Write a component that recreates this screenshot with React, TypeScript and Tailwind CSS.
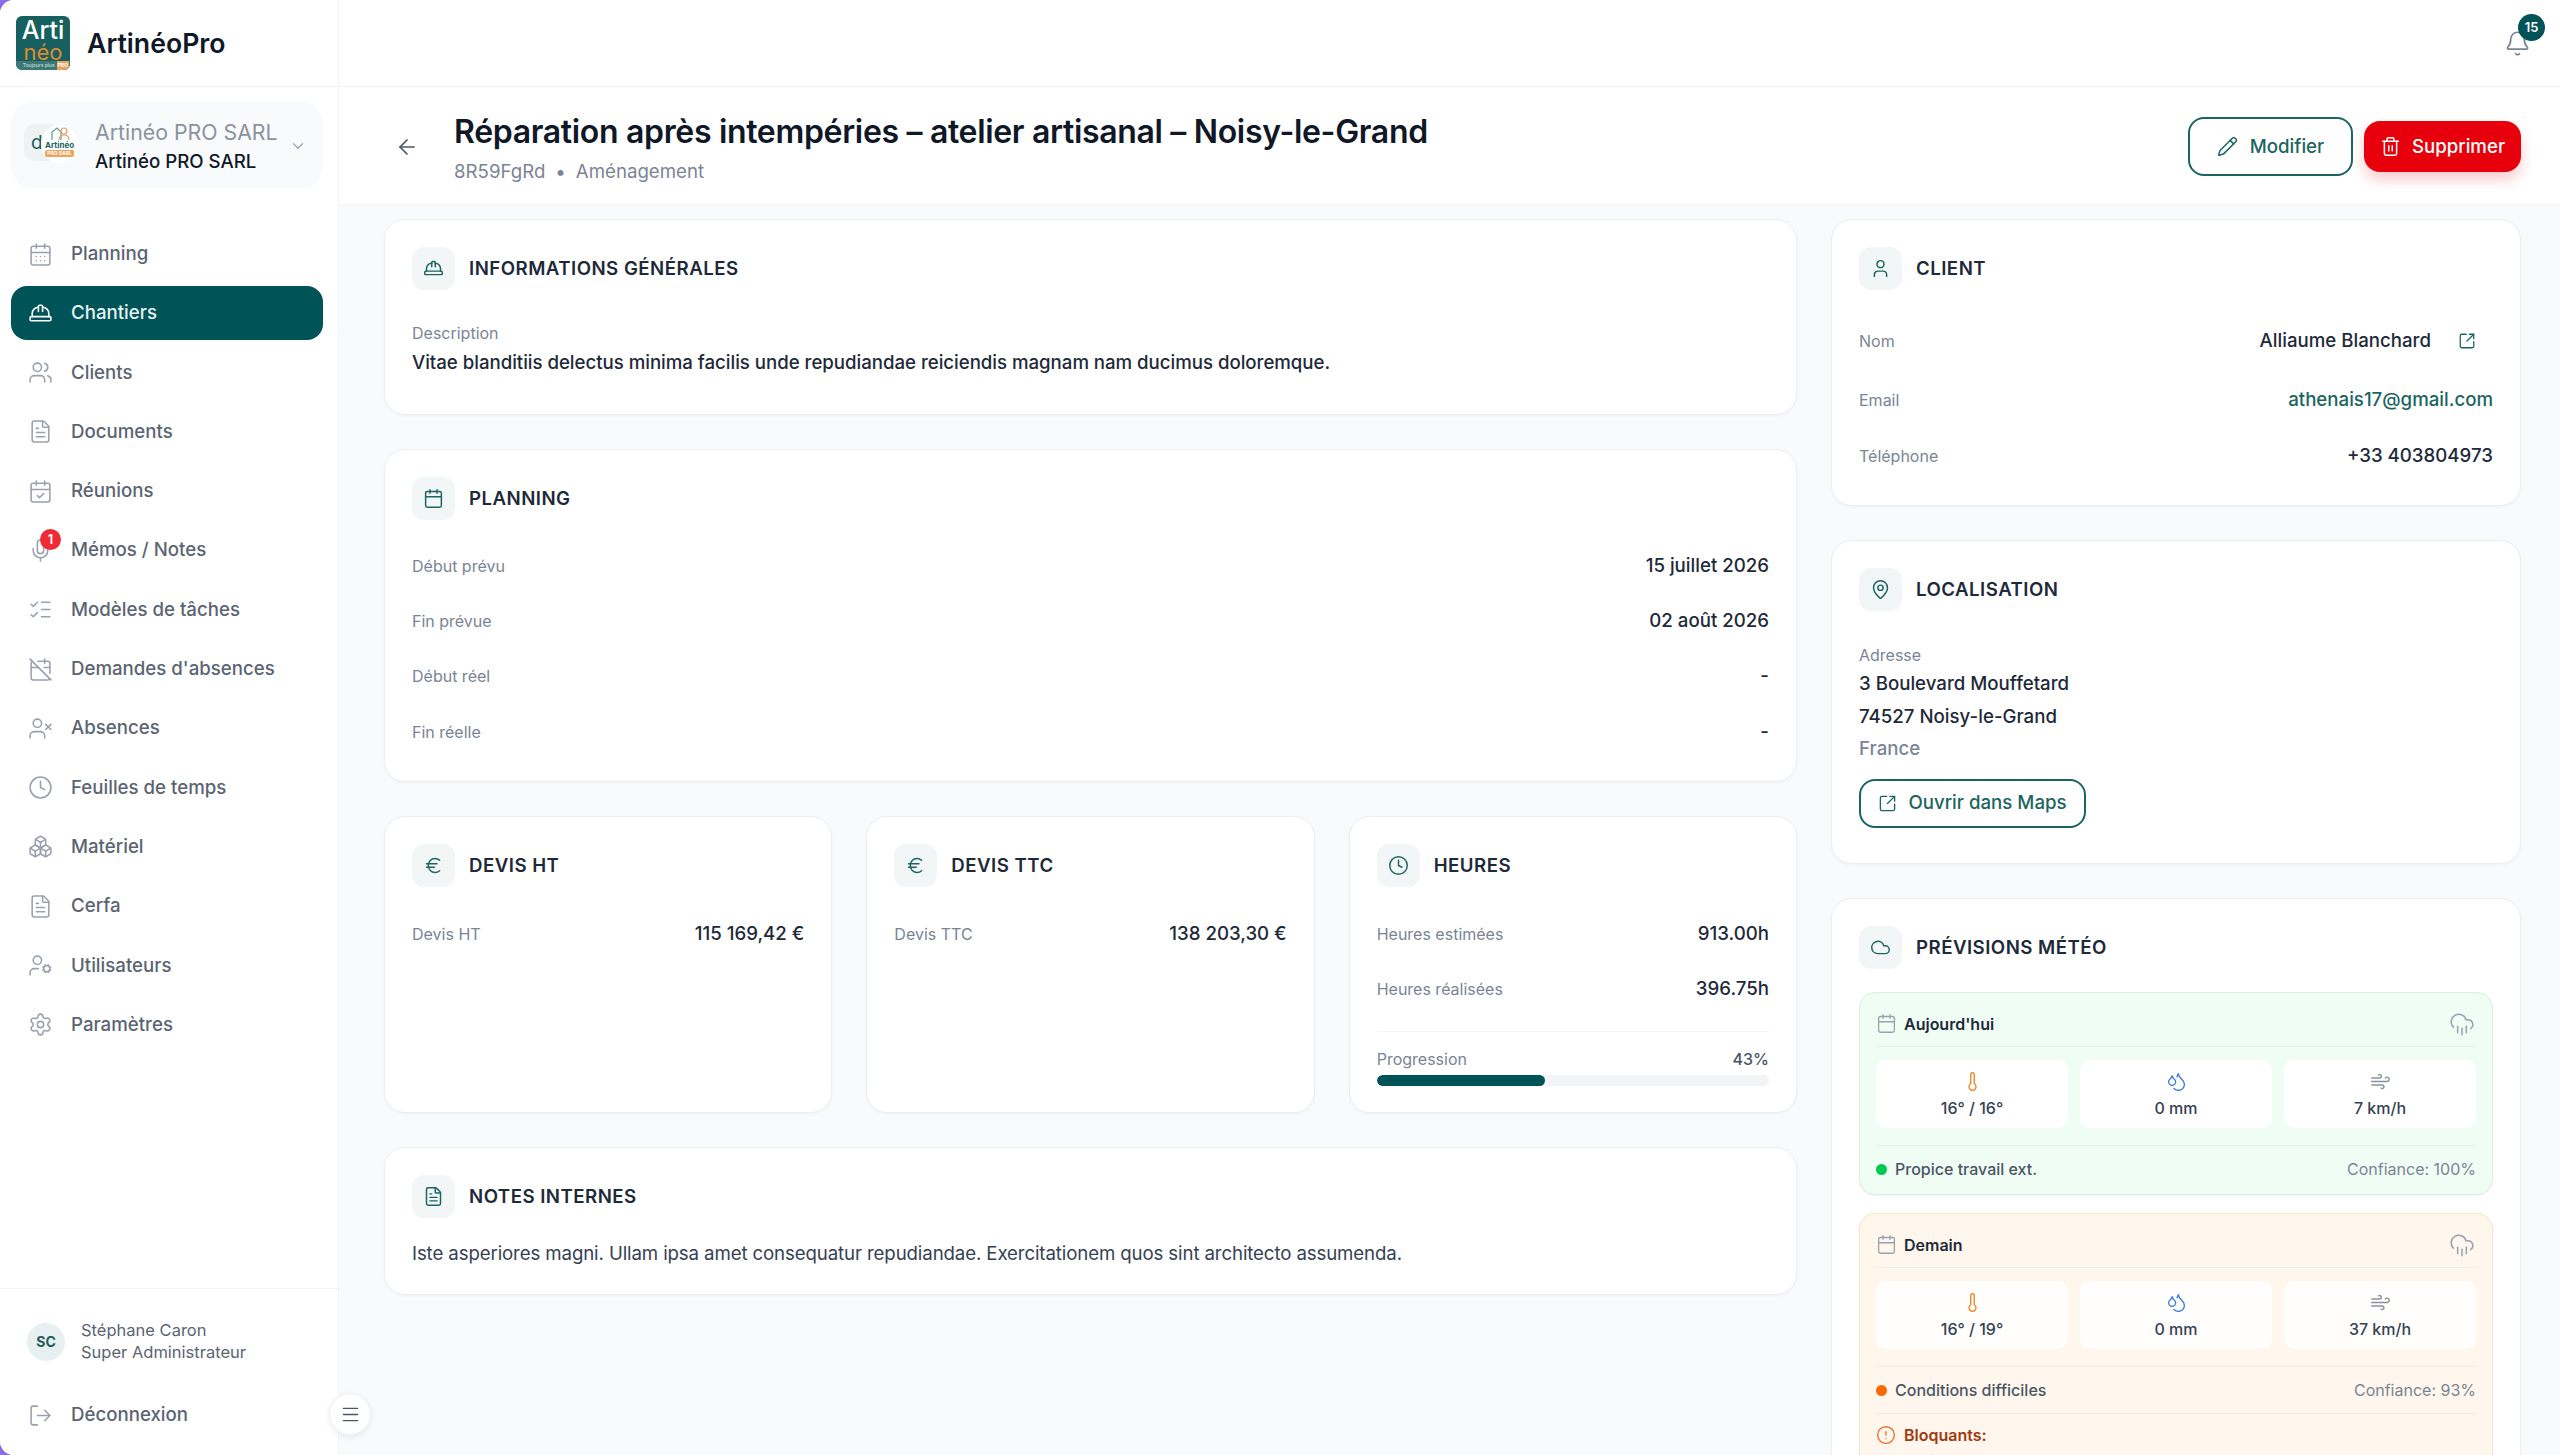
import React from "react";
import {
  CalendarDays, HardHat, Users, FileText, CalendarCheck, Mic, ListChecks, CalendarOff, UserX, Clock, Boxes,
  UserCog, Settings, LogOut, Menu, Bell, ArrowLeft, Pencil, Trash2, Euro, User, MapPin, SquareArrowOutUpRight,
  Cloud, CloudRain, Thermometer, Droplets, Wind, CircleAlert, Calendar, ChevronDown,
} from "lucide-react";

const nav = [
  { label: "Planning", icon: CalendarDays },
  { label: "Chantiers", icon: HardHat, active: true },
  { label: "Clients", icon: Users },
  { label: "Documents", icon: FileText },
  { label: "Réunions", icon: CalendarCheck },
  { label: "Mémos / Notes", icon: Mic, badge: "1" },
  { label: "Modèles de tâches", icon: ListChecks },
  { label: "Demandes d'absences", icon: CalendarOff },
  { label: "Absences", icon: UserX },
  { label: "Feuilles de temps", icon: Clock },
  { label: "Matériel", icon: Boxes },
  { label: "Cerfa", icon: FileText },
  { label: "Utilisateurs", icon: UserCog },
  { label: "Paramètres", icon: Settings },
];

function Logo() {
  return (
    <div className="flex h-[54px] w-[54px] shrink-0 flex-col items-center overflow-hidden rounded-[6px] bg-[#17605f]">
      <span className="text-[25px] leading-[28px] font-medium text-white">Arti</span>
      <span className="text-[22px] leading-[17px] text-[#df8b33]">néo</span>
      <span className="mt-auto flex h-[9px] w-full items-center justify-end gap-[2px] bg-[#3d7773] pr-[1px] text-[5px] leading-[9px] text-[#d7e6e4]">
        Toujours plus<span className="bg-[#e8a35c] px-[1px] font-bold text-white">PRO</span>
      </span>
    </div>
  );
}

function OrgLogo() {
  return (
    <div className="relative h-[42px] w-[52px] shrink-0">
      <div className="flex h-[37px] w-[36px] items-center rounded-[10px] bg-[#eef2f3] pl-[7px] text-[19px] leading-none text-[#14605f]">d</div>
      <div className="absolute top-[1px] left-[17px] flex h-[38px] w-[37px] flex-col items-center rounded-full bg-white">
        <svg width="20" height="15" viewBox="0 0 20 15" fill="none" className="mt-[1px]">
          <path d="M2 14V6l5-4 4 4v8" stroke="#5f9e97" strokeWidth="1.2" />
          <circle cx="14" cy="5" r="3" stroke="#e59a5a" strokeWidth="1.2" />
          <path d="M9 14c0-3 2-5 5-5s5 2 5 5" stroke="#e59a5a" strokeWidth="1.2" />
        </svg>
        <span className="text-[8px] leading-[8px] font-bold text-[#1b6560]">Artinéo</span>
        <span className="mt-[1px] rounded-[2px] bg-[#e8a35c] px-[2px] text-[5px] leading-[7px] font-bold text-white">PRO SARL</span>
      </div>
    </div>
  );
}

function Sidebar() {
  return (
    <aside className="relative flex h-full w-[339px] shrink-0 flex-col border-r border-[#f3f4f6] bg-white">
      <div className="flex h-[87px] shrink-0 items-center gap-[17px] border-b border-[#f3f4f6] pl-[16px]">
        <Logo />
        <span className="text-[26.67px] font-semibold text-[#101828]">ArtinéoPro</span>
      </div>
      <div className="mt-[15px] mr-[15px] ml-[11px] flex h-[86px] shrink-0 items-center rounded-[21px] bg-[#f9fafb] pl-[13px] shadow-[0_1px_2px_rgba(0,0,0,0.01)]">
        <OrgLogo />
        <div className="mt-[3px] ml-[19px] flex flex-col">
          <span className="text-[21.3px] leading-[31px] text-[#8b929e]">Artinéo PRO SARL</span>
          <span className="text-[18.67px] leading-[28px] font-medium text-[#101828]">Artinéo PRO SARL</span>
        </div>
        <ChevronDown className="mt-[2px] ml-[11px] h-[18px] w-[18px] text-[#99a1af]" strokeWidth={1.6} />
      </div>
      <nav className="mt-[39px] mr-[15px] ml-[11px] flex flex-col gap-[5.3px]">
        {nav.map((n) => {
          const Icon = n.icon;
          return (
            <div
              key={n.label}
              className={
                n.active
                  ? "flex h-[54px] items-center gap-[18px] rounded-[16px] bg-[#005356] pl-[17px] text-[18.67px] font-medium text-[#e6f2f1]"
                  : "flex h-[54px] items-center gap-[18px] rounded-[16px] pl-[17px] text-[18.67px] font-medium text-[#5b6472]"
              }
            >
              <span className="relative">
                <Icon className={n.active ? "h-[25px] w-[25px] text-white" : "h-[25px] w-[25px] text-[#99a1af]"} strokeWidth={1.5} />
                {n.badge && (
                  <span className="absolute -top-[9px] left-[12px] flex h-[21px] w-[21px] items-center justify-center rounded-full bg-[#ef2b36] text-[13px] font-semibold text-white">
                    {n.badge}
                  </span>
                )}
              </span>
              {n.label}
            </div>
          );
        })}
      </nav>
      <div className="mt-auto h-[167px] shrink-0 border-t border-[#f3f4f6]">
        <div className="mt-[31px] ml-[27px] flex items-center gap-[16px]">
          <div className="flex h-[38px] w-[38px] items-center justify-center rounded-full bg-[#e8eff0] text-[14px] font-bold text-[#1f5c58]">SC</div>
          <div className="flex flex-col text-[16.5px] leading-[21.5px] text-[#5b6472]">
            <span>Stéphane Caron</span>
            <span>Super Administrateur</span>
          </div>
        </div>
        <div className="mt-[32px] ml-[28px] flex h-[40px] items-center gap-[18px] text-[18.67px] font-medium text-[#5b6472]">
          <LogOut className="h-[25px] w-[25px] text-[#99a1af]" strokeWidth={1.5} />
          Déconnexion
        </div>
      </div>
      <button className="absolute bottom-[20px] -right-[33px] z-10 flex h-[42px] w-[42px] items-center justify-center rounded-full border border-[#f0f1f3] bg-white shadow-[0_2px_6px_rgba(0,0,0,0.08)]">
        <Menu className="h-[21px] w-[21px] text-[#4a5565]" strokeWidth={1.7} />
      </button>
    </aside>
  );
}

function Card({ className = "", children }: { className?: string; children: React.ReactNode }) {
  return <section className={"rounded-[21px] border border-[#eceff2] bg-white px-[27px] pt-[27px] shadow-[0_1px_3px_rgba(16,24,40,0.04)] " + className}>{children}</section>;
}

function CardTitle({ icon: Icon, title }: { icon: any; title: string }) {
  return (
    <div className="flex h-[43px] items-center gap-[14px]">
      <div className="flex h-[43px] w-[43px] items-center justify-center rounded-[12px] bg-[#f3f6f7]">
        <Icon className="h-[21px] w-[21px] text-[#1b6560]" strokeWidth={1.7} />
      </div>
      <h2 className="text-[18.67px] font-semibold tracking-[0.47px] text-[#1e2939] uppercase">{title}</h2>
    </div>
  );
}

function Row({ label, value, h = "h-[55.33px]", valueClass = "text-[#1e2939]" }: { label: string; value: React.ReactNode; h?: string; valueClass?: string }) {
  return (
    <div className={"flex items-center justify-between " + h}>
      <span className="text-[16px] text-[#7b8494]">{label}</span>
      <span className={"text-[18.67px] font-medium " + valueClass}>{value}</span>
    </div>
  );
}

function WeatherBox({
  tone, day, temp, rain, wind, dot, status, conf, children,
}: {
  tone: string; day: string; temp: string; rain: string; wind: string; dot: string; status: string; conf: string; children?: React.ReactNode;
}) {
  return (
    <div className={"rounded-[16px] border px-[16px] pt-[8px] pb-[2px] shadow-[0_1px_2px_rgba(16,24,40,0.05)] " + tone}>
      <div className="flex h-[46px] items-center border-b border-[#e5e7eb]/70">
        <Calendar className="h-[21px] w-[21px] text-[#99a1af]" strokeWidth={1.5} />
        <span className="ml-[7px] text-[16px] font-semibold text-[#1e2939]">{day}</span>
        <CloudRain className="mr-[1px] ml-auto h-[26px] w-[26px] text-[#99a1af]" strokeWidth={1.4} />
      </div>
      <div className="mt-[13px] grid h-[68px] grid-cols-3 gap-[12px]">
        {[
          { I: Thermometer, c: "text-[#f0872b]", t: temp },
          { I: Droplets, c: "text-[#3f7fd6]", t: rain },
          { I: Wind, c: "text-[#8b929e]", t: wind },
        ].map(({ I, c, t }, i) => (
          <div key={i} className="flex flex-col items-center rounded-[10px] bg-white/90 pt-[11px]">
            <I className={"h-[21px] w-[21px] " + c} strokeWidth={1.6} />
            <span className="mt-[5px] text-[16px] leading-[22px] font-medium text-[#364153]">{t}</span>
          </div>
        ))}
      </div>
      <div className="mt-[17px] flex h-[47px] items-center border-t border-[#e5e7eb]/70">
        <span className={"h-[11px] w-[11px] rounded-full " + dot} />
        <span className="ml-[8px] text-[16px] font-medium text-[#4a5565]">{status}</span>
        <span className="ml-auto text-[16px] text-[#7b8494]">{conf}</span>
      </div>
      {children}
    </div>
  );
}

export default function App() {
  return (
    <div className="h-[1455px] w-[2560px] overflow-hidden bg-[#8a6ce8] font-['Inter',sans-serif]">
      <div className="flex h-full w-full overflow-hidden rounded-l-[14px] bg-[#f8fafc]">
        <Sidebar />
        <div className="flex min-w-0 flex-1 flex-col">
          <header className="flex h-[87px] shrink-0 justify-end border-b border-[#f3f4f6] bg-white pt-[30px] pr-[29px]">
            <span className="relative h-[27px]">
              <Bell className="h-[27px] w-[27px] text-[#7b8494]" strokeWidth={1.5} />
              <span className="absolute -top-[16px] left-[14px] flex h-[27px] w-[27px] items-center justify-center rounded-full bg-[#005356] text-[13px] font-semibold text-white">15</span>
            </span>
          </header>
          <div className="flex h-[118px] shrink-0 items-center border-b border-[#f3f5f7] bg-white pt-[2px] pr-[39px] pl-[56px]">
            <ArrowLeft className="h-[24px] w-[24px] text-[#4a5565]" strokeWidth={1.7} />
            <div className="mt-[3px] ml-[35px] flex flex-col">
              <h1 className="text-[32px] leading-[42px] font-semibold tracking-[-0.33px] text-[#101828]">Réparation après intempéries – atelier artisanal – Noisy-le-Grand</h1>
              <p className="mt-[6px] text-[18.67px] leading-[26px] text-[#7b8494]">8R59FgRd<span className="mx-[10px]">•</span>Aménagement</p>
            </div>
            <div className="ml-auto flex items-center gap-[11px]">
              <button className="flex h-[59px] w-[165px] items-center justify-center gap-[12px] rounded-[16px] border-[2.67px] border-[#1b6560] bg-white text-[18.67px] font-medium text-[#1b6560]">
                <Pencil className="h-[21px] w-[21px]" strokeWidth={1.7} /> Modifier
              </button>
              <button className="flex h-[51px] w-[157px] items-center justify-center gap-[11px] rounded-[16px] bg-[#e7000b] text-[18.67px] font-medium text-white shadow-[0_8px_14px_rgba(231,0,11,0.2)]">
                <Trash2 className="h-[21px] w-[21px]" strokeWidth={1.7} /> Supprimer
              </button>
            </div>
          </div>
          <main className="flex min-h-0 flex-1 items-start gap-[34px] overflow-hidden pt-[14px] pl-[45px]">
            <div className="flex w-[1413px] shrink-0 flex-col gap-[34px]">
              <Card className="h-[196px]">
                <CardTitle icon={HardHat} title="Informations générales" />
                <p className="mt-[33px] text-[16px] leading-[21px] text-[#7b8494]">Description</p>
                <p className="mt-[5px] text-[18.67px] leading-[28px] font-medium tracking-[-0.03px] text-[#1e2939]">Vitae blanditiis delectus minima facilis unde repudiandae reiciendis magnam nam ducimus doloremque.</p>
              </Card>
              <Card className="h-[333px]">
                <CardTitle icon={Calendar} title="Planning" />
                <div className="mt-[18px]">
                  <Row label="Début prévu" value="15 juillet 2026" />
                  <Row label="Fin prévue" value="02 août 2026" />
                  <Row label="Début réel" value="-" />
                  <Row label="Fin réelle" value="-" />
                </div>
              </Card>
              <div className="grid h-[297px] grid-cols-3 gap-[34px]">
                <Card>
                  <CardTitle icon={Euro} title="Devis HT" />
                  <div className="mt-[19px]"><Row label="Devis HT" value="115 169,42 €" /></div>
                </Card>
                <Card>
                  <CardTitle icon={Euro} title="Devis TTC" />
                  <div className="mt-[19px]"><Row label="Devis TTC" value="138 203,30 €" /></div>
                </Card>
                <Card>
                  <CardTitle icon={Clock} title="Heures" />
                  <div className="mt-[19px]">
                    <Row label="Heures estimées" value="913.00h" />
                    <Row label="Heures réalisées" value="396.75h" />
                  </div>
                  <div className="mt-[14px] border-t border-[#f3f4f6] pt-[17px]">
                    <div className="flex items-center justify-between text-[16px] leading-[21px] text-[#7b8494]">
                      <span>Progression</span>
                      <span className="font-medium text-[#4a5565]">43%</span>
                    </div>
                    <div className="mt-[5px] h-[11px] overflow-hidden rounded-full bg-[#f3f4f6]">
                      <div className="h-full w-[43%] rounded-full bg-[#005356]" />
                    </div>
                  </div>
                </Card>
              </div>
              <Card className="h-[148px]">
                <CardTitle icon={FileText} title="Notes internes" />
                <p className="mt-[22px] text-[18.67px] leading-[28px] tracking-[-0.12px] text-[#364153]">Iste asperiores magni. Ullam ipsa amet consequatur repudiandae. Exercitationem quos sint architecto assumenda.</p>
              </Card>
            </div>
            <div className="flex w-[690px] shrink-0 flex-col gap-[34px]">
              <Card className="h-[287px]">
                <CardTitle icon={User} title="Client" />
                <div className="mt-[21px] flex h-[60px] items-center justify-between">
                  <span className="text-[16px] text-[#7b8494]">Nom</span>
                  <span className="flex items-center pr-[17px] text-[18.67px] font-medium text-[#1e2939]">
                    Alliaume Blanchard
                    <SquareArrowOutUpRight className="ml-[27px] h-[18px] w-[18px] text-[#1b6560]" strokeWidth={1.7} />
                  </span>
                </div>
                <Row h="h-[57px]" label="Email" value="athenais17@gmail.com" valueClass="text-[#1b6560]" />
                <Row label="Téléphone" value="+33 403804973" />
              </Card>
              <Card className="h-[324px]">
                <CardTitle icon={MapPin} title="Localisation" />
                <p className="mt-[34px] text-[16px] leading-[21px] text-[#7b8494]">Adresse</p>
                <div className="mt-[2px] text-[18.67px] leading-[32.5px] font-medium text-[#1e2939]">
                  <p>3 Boulevard Mouffetard</p>
                  <p>74527 Noisy-le-Grand</p>
                  <p className="text-[#7b8494]">France</p>
                </div>
                <button className="mt-[13px] flex h-[49px] w-[227px] items-center justify-center gap-[11px] rounded-[16px] border-[2.67px] border-[#1b6560] text-[18.67px] font-medium text-[#1b6560]">
                  <SquareArrowOutUpRight className="h-[19px] w-[19px]" strokeWidth={1.7} /> Ouvrir dans Maps
                </button>
              </Card>
              <Card className="pb-[20px]">
                <CardTitle icon={Cloud} title="Prévisions météo" />
                <div className="mt-[23px] flex flex-col gap-[18px]">
                  <WeatherBox tone="border-[#d3f3e0] bg-[#f0fdf4]" day="Aujourd'hui" temp="16° / 16°" rain="0 mm" wind="7 km/h" dot="bg-[#00c950]" status="Propice travail ext." conf="Confiance: 100%" />
                  <WeatherBox tone="border-[#fde3c4] bg-[#fff7ed]" day="Demain" temp="16° / 19°" rain="0 mm" wind="37 km/h" dot="bg-[#ff6900]" status="Conditions difficiles" conf="Confiance: 93%">
                    <div className="border-t border-[#e5e7eb]/70">
                      <div className="flex h-[41px] items-center">
                        <CircleAlert className="h-[20px] w-[20px] text-[#f0702b]" strokeWidth={1.7} />
                        <span className="ml-[8px] text-[16px] font-semibold text-[#9f3a12]">Bloquants:</span>
                      </div>
                      <ul className="-mt-[4px] list-disc pl-[38px] text-[16px] leading-[21px] text-[#9f3a12]"><li>Wind</li></ul>
                    </div>
                  </WeatherBox>
                </div>
              </Card>
            </div>
          </main>
        </div>
      </div>
    </div>
  );
}
